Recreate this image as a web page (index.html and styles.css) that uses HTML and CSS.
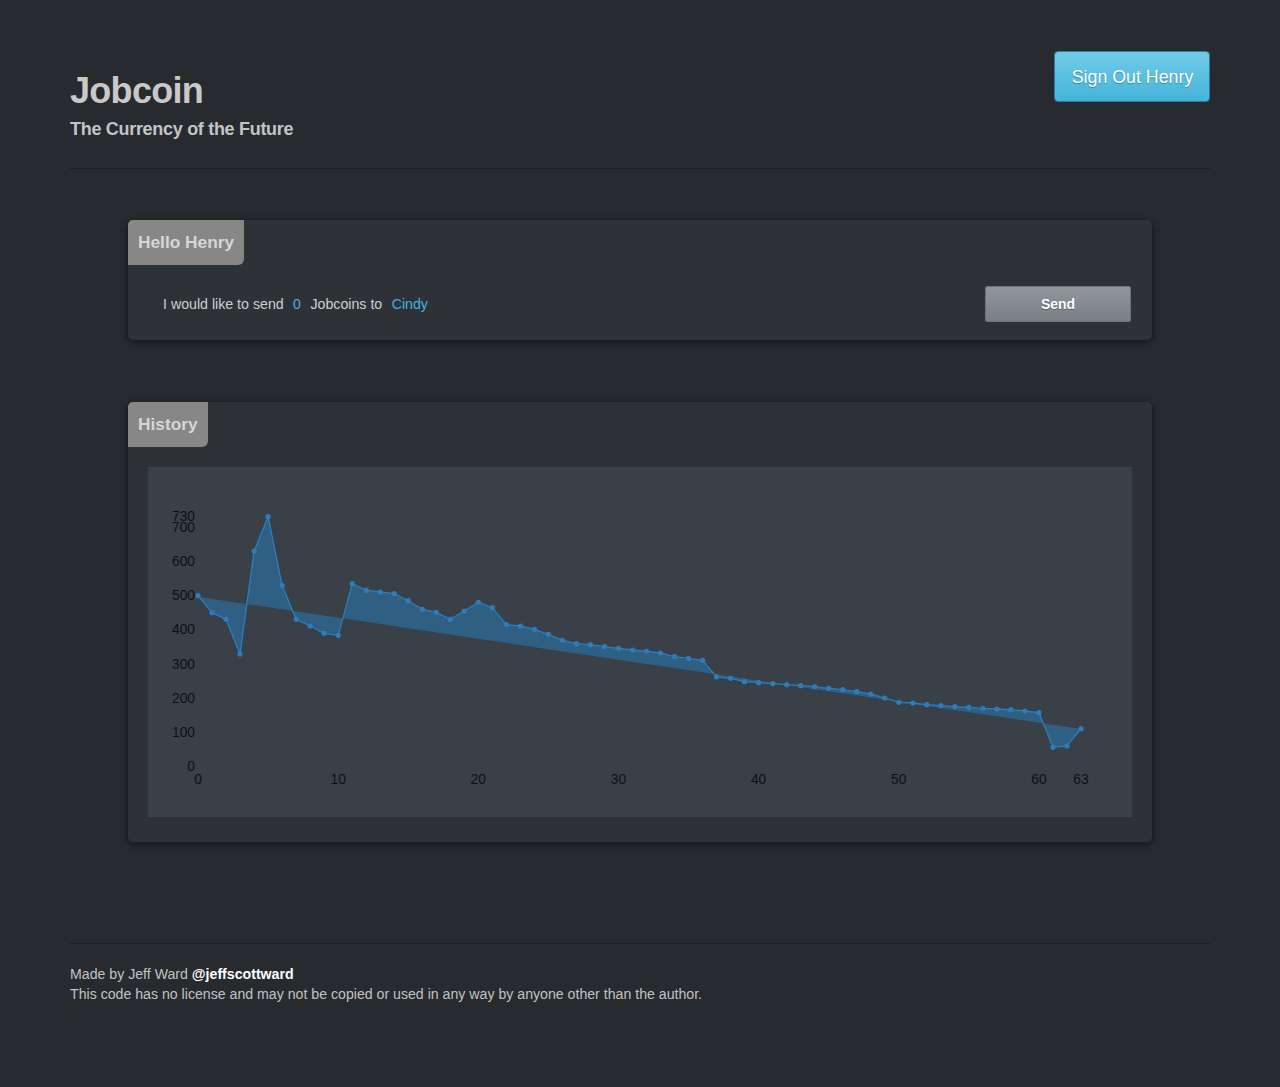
FILE: index.html
```html
<!DOCTYPE html>
<html lang="en">
<head>
<meta charset="utf-8">
<title>Jobcoin</title>
<link rel="stylesheet" href="styles.css">
</head>
<body>
<div class="container">
  <header class="page-header">
    <div class="brand">
      <h1 class="title">Jobcoin</h1>
      <p class="subtitle">The Currency of the Future</p>
    </div>
    <button class="btn-signout">Sign Out Henry</button>
  </header>

  <section class="panel panel-send">
    <div class="panel-tab">Hello Henry</div>
    <div class="send-row">
      <p class="send-text">I would like to send <span class="hl">0</span> Jobcoins to <span class="hl">Cindy</span></p>
      <button class="btn-send">Send</button>
    </div>
  </section>

  <section class="panel panel-history">
    <div class="panel-tab">History</div>
    <div class="chart">
      <svg class="chart-svg" width="984" height="350" viewBox="0 0 984 350">
        <polygon class="area" points="50,128.7 64,145.7 78,152.3 92,187 106.1,84 120.1,49.7 134.1,118.3 148.1,152.3 162.1,159 176.1,166.3 190.2,168.3 204.2,116.7 218.2,123.2 232.2,125 246.2,126.7 260.2,133.7 274.3,142.3 288.3,145.3 302.3,152.3 316.3,144 330.3,135.3 344.3,140.7 358.4,157.7 372.4,159 386.4,162.3 400.4,167.3 414.4,173.3 428.4,176.7 442.4,177.7 456.5,179.7 470.5,181.3 484.5,183 498.5,184.3 512.5,186 526.5,189.7 540.6,191.3 554.6,193.3 568.6,209.8 582.6,211.3 596.6,214.7 610.6,215.7 624.7,216.7 638.7,217.7 652.7,218.7 666.7,219.7 680.7,221.3 694.7,222.7 708.8,224.7 722.8,227 736.8,231 750.8,235.3 764.8,236 778.8,237.7 792.8,238.7 806.9,239.7 820.9,240.3 834.9,241.3 848.9,242 862.9,242.7 876.9,244 891,245.7 905,280.3 919,279 933,261.7 933,262 50,129.7"/>
        <polyline class="line" points="50,128.7 64,145.7 78,152.3 92,187 106.1,84 120.1,49.7 134.1,118.3 148.1,152.3 162.1,159 176.1,166.3 190.2,168.3 204.2,116.7 218.2,123.2 232.2,125 246.2,126.7 260.2,133.7 274.3,142.3 288.3,145.3 302.3,152.3 316.3,144 330.3,135.3 344.3,140.7 358.4,157.7 372.4,159 386.4,162.3 400.4,167.3 414.4,173.3 428.4,176.7 442.4,177.7 456.5,179.7 470.5,181.3 484.5,183 498.5,184.3 512.5,186 526.5,189.7 540.6,191.3 554.6,193.3 568.6,209.8 582.6,211.3 596.6,214.7 610.6,215.7 624.7,216.7 638.7,217.7 652.7,218.7 666.7,219.7 680.7,221.3 694.7,222.7 708.8,224.7 722.8,227 736.8,231 750.8,235.3 764.8,236 778.8,237.7 792.8,238.7 806.9,239.7 820.9,240.3 834.9,241.3 848.9,242 862.9,242.7 876.9,244 891,245.7 905,280.3 919,279 933,261.7"/>
        <g class="dots">
          <circle cx="50" cy="128.7" r="2.6"/><circle cx="64" cy="145.7" r="2.6"/><circle cx="78" cy="152.3" r="2.6"/><circle cx="92" cy="187" r="2.6"/><circle cx="106.1" cy="84" r="2.6"/><circle cx="120.1" cy="49.7" r="2.6"/><circle cx="134.1" cy="118.3" r="2.6"/><circle cx="148.1" cy="152.3" r="2.6"/><circle cx="162.1" cy="159" r="2.6"/><circle cx="176.1" cy="166.3" r="2.6"/>
          <circle cx="190.2" cy="168.3" r="2.6"/><circle cx="204.2" cy="116.7" r="2.6"/><circle cx="218.2" cy="123.2" r="2.6"/><circle cx="232.2" cy="125" r="2.6"/><circle cx="246.2" cy="126.7" r="2.6"/><circle cx="260.2" cy="133.7" r="2.6"/><circle cx="274.3" cy="142.3" r="2.6"/><circle cx="288.3" cy="145.3" r="2.6"/><circle cx="302.3" cy="152.3" r="2.6"/><circle cx="316.3" cy="144" r="2.6"/>
          <circle cx="330.3" cy="135.3" r="2.6"/><circle cx="344.3" cy="140.7" r="2.6"/><circle cx="358.4" cy="157.7" r="2.6"/><circle cx="372.4" cy="159" r="2.6"/><circle cx="386.4" cy="162.3" r="2.6"/><circle cx="400.4" cy="167.3" r="2.6"/><circle cx="414.4" cy="173.3" r="2.6"/><circle cx="428.4" cy="176.7" r="2.6"/><circle cx="442.4" cy="177.7" r="2.6"/><circle cx="456.5" cy="179.7" r="2.6"/>
          <circle cx="470.5" cy="181.3" r="2.6"/><circle cx="484.5" cy="183" r="2.6"/><circle cx="498.5" cy="184.3" r="2.6"/><circle cx="512.5" cy="186" r="2.6"/><circle cx="526.5" cy="189.7" r="2.6"/><circle cx="540.6" cy="191.3" r="2.6"/><circle cx="554.6" cy="193.3" r="2.6"/><circle cx="568.6" cy="209.8" r="2.6"/><circle cx="582.6" cy="211.3" r="2.6"/><circle cx="596.6" cy="214.7" r="2.6"/>
          <circle cx="610.6" cy="215.7" r="2.6"/><circle cx="624.7" cy="216.7" r="2.6"/><circle cx="638.7" cy="217.7" r="2.6"/><circle cx="652.7" cy="218.7" r="2.6"/><circle cx="666.7" cy="219.7" r="2.6"/><circle cx="680.7" cy="221.3" r="2.6"/><circle cx="694.7" cy="222.7" r="2.6"/><circle cx="708.8" cy="224.7" r="2.6"/><circle cx="722.8" cy="227" r="2.6"/><circle cx="736.8" cy="231" r="2.6"/>
          <circle cx="750.8" cy="235.3" r="2.6"/><circle cx="764.8" cy="236" r="2.6"/><circle cx="778.8" cy="237.7" r="2.6"/><circle cx="792.8" cy="238.7" r="2.6"/><circle cx="806.9" cy="239.7" r="2.6"/><circle cx="820.9" cy="240.3" r="2.6"/><circle cx="834.9" cy="241.3" r="2.6"/><circle cx="848.9" cy="242" r="2.6"/><circle cx="862.9" cy="242.7" r="2.6"/><circle cx="876.9" cy="244" r="2.6"/>
          <circle cx="891" cy="245.7" r="2.6"/><circle cx="905" cy="280.3" r="2.6"/><circle cx="919" cy="279" r="2.6"/><circle cx="933" cy="261.7" r="2.6"/>
        </g>
        <g class="y-labels">
          <text x="47" y="50">730</text>
          <text x="47" y="61">700</text>
          <text x="47" y="95.3">600</text>
          <text x="47" y="129.5">500</text>
          <text x="47" y="163.8">400</text>
          <text x="47" y="198.1">300</text>
          <text x="47" y="232.3">200</text>
          <text x="47" y="266.5">100</text>
          <text x="47" y="300.5">0</text>
        </g>
        <g class="x-labels">
          <text x="50" y="313">0</text>
          <text x="190.2" y="313">10</text>
          <text x="330.3" y="313">20</text>
          <text x="470.5" y="313">30</text>
          <text x="610.6" y="313">40</text>
          <text x="750.8" y="313">50</text>
          <text x="891" y="313">60</text>
          <text x="933" y="313">63</text>
        </g>
      </svg>
    </div>
  </section>

  <footer class="page-footer">
    <p class="footer-line">Made by Jeff Ward <a class="handle" href="#">@jeffscottward</a></p>
    <p class="footer-line">This code has no license and may not be copied or used in any way by anyone other than the author.</p>
  </footer>
</div>
</body>
</html>
```

FILE: styles.css
```css
html, body {
  margin: 0;
  padding: 0;
}

body {
  background: #272a2f;
  font-family: "Liberation Sans", Arial, sans-serif;
  color: #c8c8c8;
  min-height: 1087px;
}

.container {
  width: 1140px;
  margin: 0 auto;
}

/* Header */
.page-header {
  display: flex;
  justify-content: space-between;
  align-items: flex-start;
  padding-bottom: 29px;
  border-bottom: 1px solid #1c1e22;
}

.title {
  margin: 71px 0 0;
  font-size: 36px;
  line-height: 40px;
  font-weight: bold;
  letter-spacing: -0.7px;
  color: #c9c9c9;
}

.subtitle {
  margin: 8px 0 0;
  font-size: 18px;
  line-height: 20px;
  font-weight: bold;
  letter-spacing: -0.3px;
  color: #c4c4c4;
}

.btn-signout {
  margin-top: 51px;
  width: 156px;
  height: 51px;
  padding: 0 0 0 1px;
  border: 1px solid #2b7f9d;
  border-radius: 4px;
  background: linear-gradient(to bottom, #70cce7 0%, #45b4da 100%);
  color: #ffffff;
  font-family: "Liberation Sans", Arial, sans-serif;
  font-size: 17.8px;
  line-height: 51px;
  text-shadow: 0 1px 1px rgba(0, 0, 0, 0.3);
  cursor: pointer;
}

/* Panels */
.panel {
  width: 1024px;
  margin: 0 auto;
  background: #2e3236;
  border-radius: 5px;
  box-shadow: 0 2px 8px rgba(0, 0, 0, 0.55);
  overflow: hidden;
}

.panel-send {
  margin-top: 51px;
}

.panel-history {
  margin-top: 62px;
  padding-bottom: 25px;
}

.panel-tab {
  display: inline-block;
  height: 45px;
  line-height: 45px;
  padding: 0 10px;
  background: #878787;
  color: #d6d6d6;
  font-size: 17.3px;
  font-weight: bold;
  border-radius: 0 0 6px 0;
}

.send-row {
  display: flex;
  align-items: center;
  justify-content: space-between;
  padding: 21px 21px 18px 35px;
}

.send-text {
  margin: 0;
  font-size: 14.2px;
  color: #cfcfcf;
}

.hl {
  color: #3fb3e3;
  padding: 0 5.5px;
}

.btn-send {
  width: 146px;
  height: 36px;
  padding: 0;
  border: 1px solid #6f7479;
  border-radius: 2px;
  background: linear-gradient(to bottom, #91969c 0%, #7a7f85 100%);
  color: #ffffff;
  font-family: "Liberation Sans", Arial, sans-serif;
  font-size: 14px;
  font-weight: bold;
  text-shadow: 0 1px 1px rgba(0, 0, 0, 0.35);
  cursor: pointer;
}

/* Chart */
.chart {
  margin: 20px 20px 0;
  height: 350px;
  background: #394047;
}

.chart-svg {
  display: block;
}

.area {
  fill: #2e6187;
  fill-opacity: 0.95;
  stroke: none;
}

.line {
  fill: none;
  stroke: #2c7dbd;
  stroke-width: 1.3;
}

.dots circle {
  fill: #2c7dbd;
}

.y-labels text,
.x-labels text {
  font-family: "Liberation Sans", Arial, sans-serif;
  font-size: 13.8px;
  fill: #0e1114;
  dominant-baseline: middle;
}

.y-labels text {
  text-anchor: end;
}

.x-labels text {
  text-anchor: middle;
}

/* Footer */
.page-footer {
  margin-top: 101px;
  border-top: 1px solid #1c1e22;
  padding-top: 20px;
}

.footer-line {
  margin: 0;
  font-size: 14.15px;
  line-height: 20px;
  color: #c2c2c2;
}

.handle {
  color: #ffffff;
  font-weight: bold;
  text-decoration: none;
}
```
